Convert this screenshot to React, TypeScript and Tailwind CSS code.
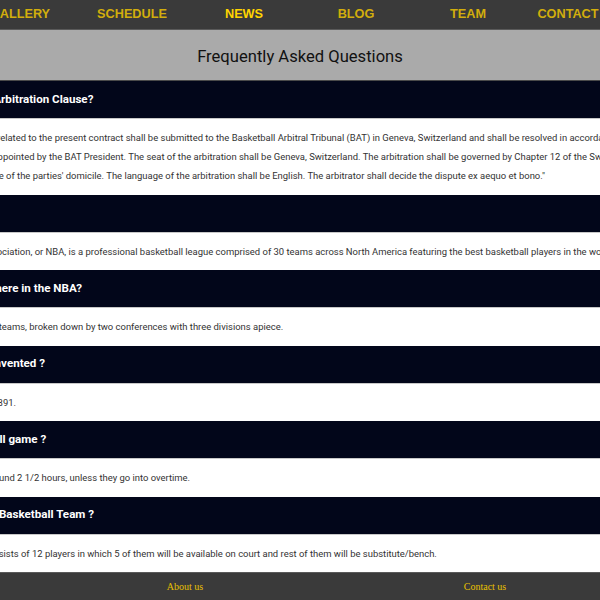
const NAV = ["HOME", "GALLERY", "SCHEDULE", "NEWS", "BLOG", "TEAM", "CONTACT", "FAQ"];

const FAQS = [
  {
    q: "What do you mean by Arbitration Clause?",
    a: [
      "\"Any dispute arising from or related to the present contract shall be submitted to the Basketball Arbitral Tribunal (BAT) in Geneva, Switzerland and shall be resolved in accordance with the BAT Arbitration",
      "Rules by a single arbitrator appointed by the BAT President. The seat of the arbitration shall be Geneva, Switzerland. The arbitration shall be governed by Chapter 12 of the Swiss Act on Private",
      "International Law, irrespective of the parties' domicile. The language of the arbitration shall be English. The arbitrator shall decide the dispute ex aequo et bono.\"",
    ],
  },
  {
    q: "What is NBA?",
    a: [
      "The National Basketball Association, or NBA, is a professional basketball league comprised of 30 teams across North America featuring the best basketball players in the world.",
    ],
  },
  {
    q: "How many teams are there in the NBA?",
    a: ["The NBA is comprised of 30 teams, broken down by two conferences with three divisions apiece."],
  },
  {
    q: "When was basketball invented ?",
    a: ["Basketball was invented in 1891."],
  },
  {
    q: "How long is a basketball game ?",
    a: ["NBA games typically last around 2 1/2 hours, unless they go into overtime."],
  },
  {
    q: "How many players in a Basketball Team ?",
    a: [
      "An NBA basketball team consists of 12 players in which 5 of them will be available on court and rest of them will be substitute/bench.",
    ],
  },
];

export default function App() {
  return (
    <div className="w-[600px] h-[600px] overflow-hidden bg-white">
      <div className="w-[896px] -ml-[148px] font-['Roboto',sans-serif]">
        <nav className="grid grid-cols-[112px_112px_112px_112px_112px_112px_88px_136px] h-[30px] bg-[#3a3a3a] border-b border-[#5a5a5a] font-['Liberation_Sans',Arial,sans-serif]">
          {NAV.map((item) => (
            <div
              key={item}
              className={
                "flex items-center justify-center text-[12.7px] font-bold whitespace-nowrap " +
                (item === "NEWS" ? "text-[#ffd400]" : "text-[#d2ae0c]")
              }
            >
              {item}
            </div>
          ))}
        </nav>

        <header className="h-[51px] pt-[4px] flex items-center justify-center bg-[#aaaaaa] border-b border-[#4a4a4a]">
          <h1 className="text-[16.6px] text-[#111]">Frequently Asked Questions</h1>
        </header>

        {FAQS.map((item) => (
          <section key={item.q}>
            <h2 className="h-[37px] flex items-center px-[27px] bg-[#02061a] text-white text-[11.6px] font-bold">
              {item.q}
            </h2>
            <div className="px-[27px] py-[9.25px] border-t border-[#c8c8c8] text-[9.45px] leading-[19px] text-[#333]">
              {item.a.map((line) => (
                <p key={line} className="whitespace-nowrap">
                  {line}
                </p>
              ))}
            </div>
          </section>
        ))}

        <footer className="grid grid-cols-2 pl-[183px] pr-[113px] h-[30px] pb-[3px] bg-[#3a3a3a] border-t border-[#5a5a5a] font-['Liberation_Serif',serif] text-[10px] text-[#e8c000]">
          <div className="flex items-center justify-center">About us</div>
          <div className="flex items-center justify-center">Contact us</div>
        </footer>
      </div>
    </div>
  );
}
